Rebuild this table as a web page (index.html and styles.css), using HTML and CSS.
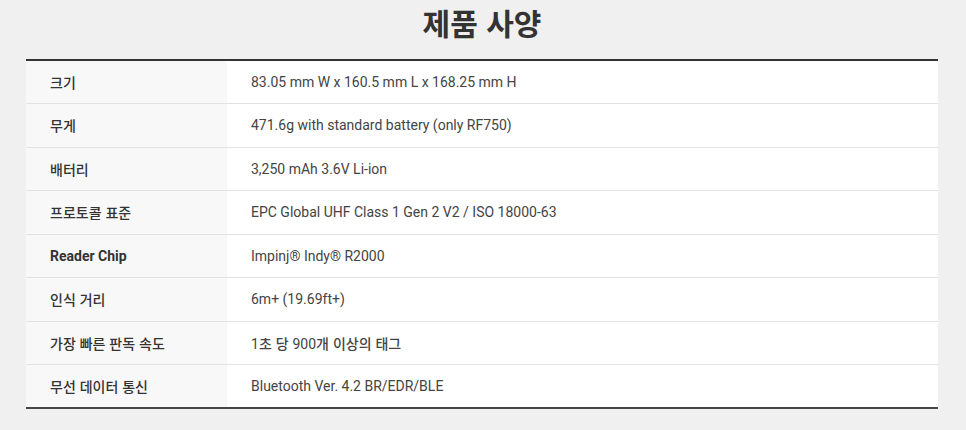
FILE: index.html
```html
<!DOCTYPE html>
<html lang="ko">
<head>
<meta charset="utf-8">
<link rel="stylesheet" href="styles.css">
</head>
<body>
<section class="specs">
  <h2 class="specs-title">제품 사양</h2>
  <table class="spec-table">
    <tbody>
      <tr><th><span class="ko">크기</span></th><td>83.05 mm W x 160.5 mm L x 168.25 mm H</td></tr>
      <tr><th><span class="ko">무게</span></th><td>471.6g with standard battery (only RF750)</td></tr>
      <tr><th><span class="ko">배터리</span></th><td>3,250 mAh 3.6V Li-ion</td></tr>
      <tr><th><span class="ko">프로토콜 표준</span></th><td>EPC Global UHF Class 1 Gen 2 V2 / ISO 18000-63</td></tr>
      <tr><th class="latin">Reader Chip</th><td>Impinj® Indy® R2000</td></tr>
      <tr><th><span class="ko">인식 거리</span></th><td>6m+ (19.69ft+)</td></tr>
      <tr><th><span class="ko">가장 빠른 판독 속도</span></th><td>1<span class="ko">초 당 </span>900<span class="ko">개 이상의 태그</span></td></tr>
      <tr><th><span class="ko">무선 데이터 통신</span></th><td>Bluetooth Ver. 4.2 BR/EDR/BLE</td></tr>
    </tbody>
  </table>
</section>
</body>
</html>
```
FILE: styles.css
```css
html, body {
  margin: 0;
  padding: 0;
  background: #f0f0f0;
}
body {
  font-family: Roboto, "Noto Sans CJK KR", sans-serif;
  color: #444;
}
.specs {
  width: 912px;
  margin: 0 auto;
  position: relative;
  left: -1px;
}
.specs-title {
  margin: 0;
  height: 59px;
  line-height: 44px;
  font-size: 30px;
  font-weight: 700;
  color: #333;
  text-align: center;
  font-family: "Noto Sans CJK KR", sans-serif;
}
.spec-table {
  width: 100%;
  border-collapse: collapse;
  border-top: 2px solid #333;
  border-bottom: 2px solid #444;
  font-size: 14px;
}
.spec-table th,
.spec-table td {
  height: 43.5px;
  padding: 0 24px;
  text-align: left;
  vertical-align: middle;
  border-bottom: 1px solid #e2e2e2;
  box-sizing: border-box;
}
.spec-table th {
  width: 201px;
  background: #f8f8f8;
  font-weight: 400;
  color: #333;
}
.spec-table th.latin {
  font-weight: 700;
}
.spec-table td {
  background: #fff;
  color: #444;
}
.ko {
  font-family: "Noto Sans CJK KR", sans-serif;
  font-weight: 500;
}
```
